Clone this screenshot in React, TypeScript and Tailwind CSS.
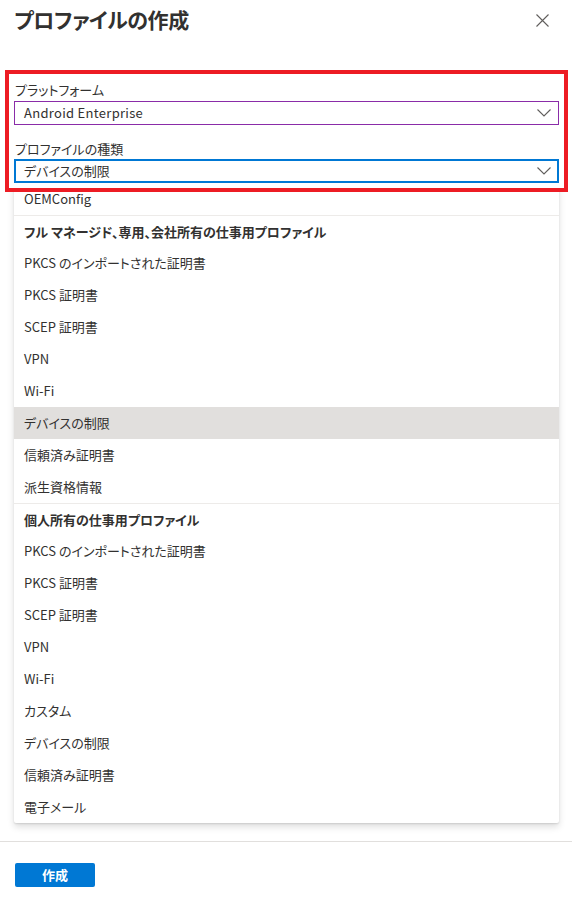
interface Opcao {
  texto: string
  tipo?: 'cabecalho' | 'selecionado'
}

const opcoes: Opcao[] = [
  { texto: 'OEMConfig' },
  { texto: 'フル マネージド、専用、会社所有の仕事用プロファイル', tipo: 'cabecalho' },
  { texto: 'PKCS のインポートされた証明書' },
  { texto: 'PKCS 証明書' },
  { texto: 'SCEP 証明書' },
  { texto: 'VPN' },
  { texto: 'Wi-Fi' },
  { texto: 'デバイスの制限', tipo: 'selecionado' },
  { texto: '信頼済み証明書' },
  { texto: '派生資格情報' },
  { texto: '個人所有の仕事用プロファイル', tipo: 'cabecalho' },
  { texto: 'PKCS のインポートされた証明書' },
  { texto: 'PKCS 証明書' },
  { texto: 'SCEP 証明書' },
  { texto: 'VPN' },
  { texto: 'Wi-Fi' },
  { texto: 'カスタム' },
  { texto: 'デバイスの制限' },
  { texto: '信頼済み証明書' },
  { texto: '電子メール' },
]

// Seta fina do dropdown
function Seta() {
  return (
    <svg width="14" height="8" viewBox="0 0 14 8" fill="none">
      <path d="M0.5 0.5 L7 7 L13.5 0.5" stroke="#605e5c" strokeWidth="1.1" />
    </svg>
  )
}

export default function App() {
  return (
    <div className="w-[572px] h-[901px] bg-white text-[#323130] font-['Noto_Sans_CJK_JP','Noto_Sans',sans-serif] [font-feature-settings:'palt'] flex flex-col overflow-hidden">
      {/* Cabeçalho */}
      <div className="h-[70px] flex justify-between items-start pl-[14px] pr-[23px] pt-[4px]">
        <h1 className="text-[21px] leading-[30px] font-bold tracking-[-0.4px]">プロファイルの作成</h1>
        <svg className="mt-[10px]" width="13" height="13" viewBox="0 0 13 13" fill="none">
          <path d="M0.5 0.5 L12.5 12.5 M12.5 0.5 L0.5 12.5" stroke="#605e5c" strokeWidth="1.1" />
        </svg>
      </div>

      {/* Formulário destacado */}
      <div className="relative z-10 ml-[5px] w-[563px] border-4 border-[#ed1c24] bg-white pt-[6px] pb-[5px] px-[5px]">
        <div className="pl-[1px] text-[13px] leading-[19px] mb-[2px]">プラットフォーム</div>
        <div className="h-[24px] border border-[#8a2ca8] flex items-center justify-between pl-[9px] pr-[7px]">
          <span className="text-[13px] tracking-[0.3px]">Android Enterprise</span>
          <Seta />
        </div>
        <div className="pl-[1px] text-[13px] leading-[19px] mt-[14px] mb-[1px]">プロファイルの種類</div>
        <div className="h-[24px] border-2 border-[#0078d4] flex items-center justify-between pl-[8px] pr-[6px]">
          <span className="text-[13px]">デバイスの制限</span>
          <Seta />
        </div>
      </div>

      {/* Lista suspensa */}
      <div className="-mt-[9px] ml-[14px] w-[545px] bg-white rounded-b-[2px] shadow-[0_3.2px_7.2px_rgba(0,0,0,0.13),0_0.6px_1.8px_rgba(0,0,0,0.11)]">
        {opcoes.map((opcao, i) => (
          <div
            key={i}
            className={`h-8 flex items-center pl-[10px] text-[13px] ${
              opcao.tipo === 'cabecalho' ? 'font-bold border-t border-[#edebe9]' : ''
            } ${opcao.tipo === 'selecionado' ? 'bg-[#e1dfdd]' : ''}`}
          >
            {opcao.texto}
          </div>
        ))}
      </div>

      {/* Rodapé */}
      <div className="mt-[18px] border-t border-[#e1dfdd] pt-[19px] pl-[15px]">
        <button className="w-[80px] h-[24px] bg-[#0078d4] rounded-[2px] text-white text-[13px] font-bold">
          作成
        </button>
      </div>
    </div>
  )
}
